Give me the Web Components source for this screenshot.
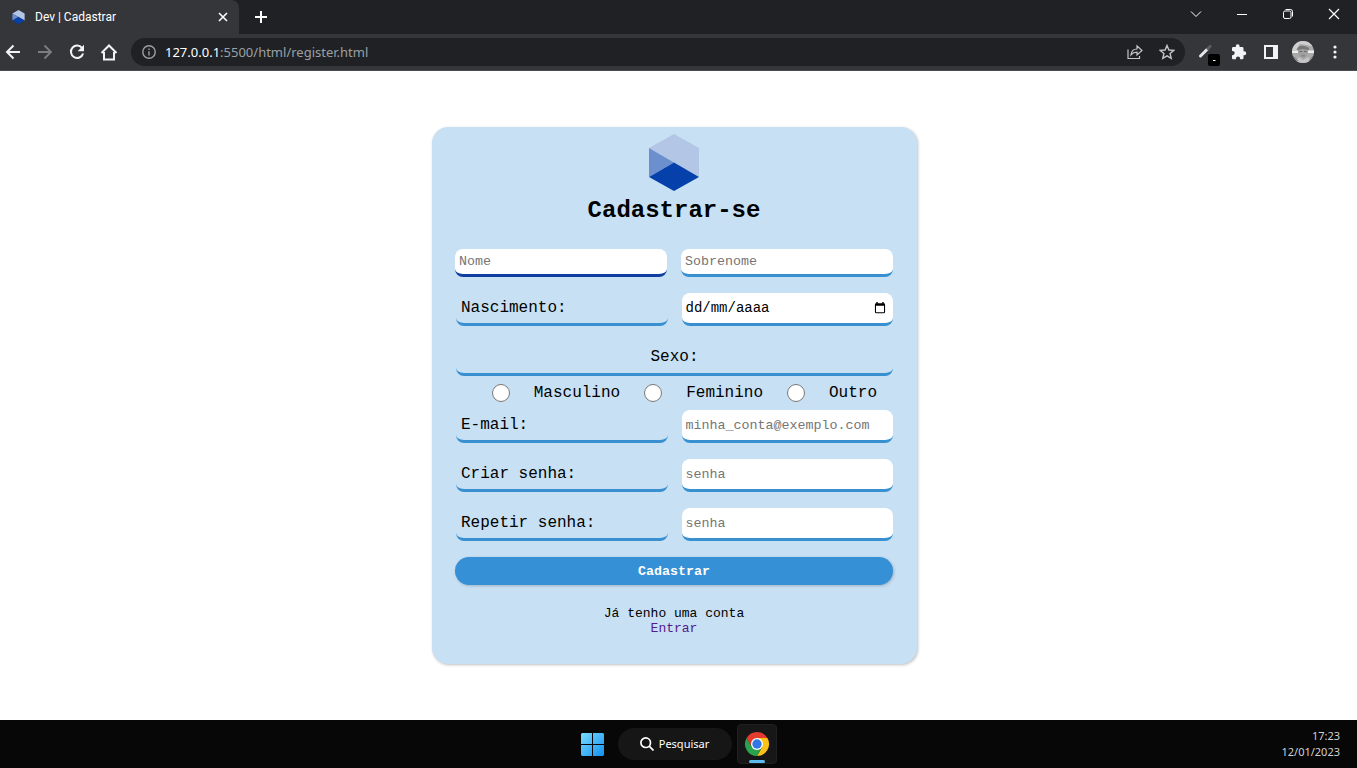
<!DOCTYPE html>
<html lang="pt-BR">
<head>
<meta charset="utf-8">
<title>Dev | Cadastrar</title>
<style>
  html, body { margin: 0; }
  body { background: #fff; color: #000; }
</style>
</head>
<body>
<app-window></app-window>

<script>
const define = (name, html, setup) => {
  const template = document.createElement('template');
  template.innerHTML = html;
  customElements.define(name, class extends HTMLElement {
    constructor() {
      super();
      this.attachShadow({ mode: 'open' }).append(template.content.cloneNode(true));
    }
    connectedCallback() { if (setup) setup(this, this.shadowRoot); }
  });
};

/* Hexagonal brand mark */
define('brand-mark', `
  <style>:host { display: block; } svg { display: block; width: 100%; height: 100%; }</style>
  <svg viewBox="0 0 50 57" aria-hidden="true">
    <path fill="#b4c6e5" d="M0 14 25 0 50 14V43L25 28.500Z"/>
    <path fill="#6c90ce" d="M0 14 25 28.500 0 43Z"/>
    <path fill="#0540ab" d="M0 43 25 28.500 50 43 25 57Z"/>
  </svg>`);

/* Flat icon button used through the window frame; the icon is slotted */
define('icon-button', `
  <style>
    :host { display: flex; flex: none; width: 32px; height: 32px; }
    button { all: unset; box-sizing: border-box; flex: 1; display: flex; align-items: center; justify-content: center; color: inherit; cursor: pointer; }
  </style>
  <button type="button"><slot></slot></button>`,
  (host, root) => root.querySelector('button').setAttribute('aria-label', host.getAttribute('label')));

/* Tab strip */
define('tab-strip', `
  <style>
    :host { display: flex; height: 34px; background: #202124; color: #fff; font: 12px/16px Roboto, sans-serif; }
    .tab { box-sizing: border-box; width: 239px; display: flex; align-items: center; padding-left: 12px; background: #35363a; border-radius: 0 8px 0 0; }
    brand-mark { width: 13px; height: 14px; margin-right: 10px; }
    .title { flex: 1; white-space: nowrap; }
    icon-button { height: 34px; }
    .new { width: 44px; }
    .space { flex: 1; }
    .win { width: 46px; height: 28px; }
  </style>
  <div class="tab">
    <brand-mark></brand-mark><span class="title">Dev | Cadastrar</span>
    <icon-button label="Fechar guia"><svg width="10" height="10" viewBox="0 0 10 10" fill="none" stroke="currentColor" stroke-width="1.600"><path d="M1 1l8 8M9 1 1 9"/></svg></icon-button>
  </div>
  <icon-button class="new" label="Nova guia"><svg width="12" height="12" viewBox="0 0 12 12" fill="none" stroke="currentColor" stroke-width="2"><path d="M6 0v12M0 6h12"/></svg></icon-button>
  <div class="space"></div>
  <icon-button class="win" label="Pesquisar guias"><svg width="12" height="8" viewBox="0 0 12 8" fill="none" stroke="currentColor"><path d="M1 1.500l5 5 5-5"/></svg></icon-button>
  <icon-button class="win" label="Minimizar"><svg width="10" height="10" viewBox="0 0 10 10" stroke="currentColor"><path d="M0 5.500h10"/></svg></icon-button>
  <icon-button class="win" label="Restaurar"><svg width="10" height="10" viewBox="0 0 10 10" fill="none" stroke="currentColor"><rect x=".5" y="2" width="7.500" height="7.500" rx="1.500"/><path d="M2.500.5H7.500Q9.500.5 9.500 2.500V7.500"/></svg></icon-button>
  <icon-button class="win" label="Fechar"><svg width="12" height="12" viewBox="0 0 12 12" stroke="currentColor" stroke-width="1.200"><path d="M1 1l10 10M11 1 1 11"/></svg></icon-button>`);

/* Navigation toolbar with the address box */
define('nav-toolbar', `
  <style>
    :host { display: flex; align-items: center; box-sizing: border-box; height: 37px; padding-right: 6px; background: #35363a; border-bottom: 1px solid #4c4c50; color: #f1f3f4; }
    nav { display: flex; margin: 0 6px 0 -3px; }
    .off { color: #7d7e82; }
    .address { flex: 1; display: flex; align-items: center; height: 28px; margin-right: 6px; padding: 0 2px; border-radius: 14px; background: #202124; color: #9aa0a6; font: 13px/20px "Noto Sans", sans-serif; }
    .url { flex: 1; white-space: nowrap; }
    b { font-weight: 400; color: #fff; }
    .avatar svg { border-radius: 50%; }
  </style>
  <nav>
    <icon-button label="Voltar"><svg width="16" height="16" viewBox="0 0 16 16" fill="none" stroke="currentColor" stroke-width="2"><path d="M15 8H2M8.500 1.500 2 8l6.500 6.500"/></svg></icon-button>
    <icon-button class="off" label="Avançar"><svg width="16" height="16" viewBox="0 0 16 16" fill="none" stroke="currentColor" stroke-width="1.800"><path d="M1 8H14M7.500 1.500 14 8l-6.500 6.500"/></svg></icon-button>
    <icon-button label="Recarregar"><svg width="16" height="16" viewBox="0 0 16 16" fill="none" stroke="currentColor" stroke-width="2"><path d="M13.300 4.300A6.200 6.200 0 1 0 14.100 9.500"/><path fill="currentColor" stroke="none" d="M15 .8V7.200H8.600Z"/></svg></icon-button>
    <icon-button label="Página inicial"><svg width="18" height="17" viewBox="0 0 18 17" fill="none" stroke="currentColor" stroke-width="2"><path d="M1.500 9 9 1.500 16.500 9M4 8V15.500H14V8"/></svg></icon-button>
  </nav>
  <div class="address">
    <icon-button label="Informações do site"><svg width="14" height="14" viewBox="0 0 14 14" fill="none" stroke="currentColor" stroke-width="1.400"><circle cx="7" cy="7" r="6.200"/><path d="M7 6.200V10.500M7 3.400V4.900"/></svg></icon-button>
    <span class="url"><b>127.0.0.1</b>:5500/html/register.html</span>
    <icon-button label="Compartilhar"><svg width="16" height="16" viewBox="0 0 16 16" fill="none" stroke="#c4c7c9" stroke-width="1.200"><path d="M1 5.500V14.500H12.500V12M4 10.800C4.500 7 7 5 10 5V1.800L15 6.500 10 11V8.200C7.500 8.200 5.500 9 4 10.800Z"/></svg></icon-button>
    <icon-button label="Favoritar"><svg width="16" height="16" viewBox="0 0 16 16" fill="none" stroke="#c4c7c9" stroke-width="1.400"><path d="M8 1.500 9.900 6 14.700 6.400 11.100 9.600 12.200 14.300 8 11.800 3.800 14.300 4.900 9.600 1.300 6.400 6.100 6Z"/></svg></icon-button>
  </div>
  <icon-button label="Seletor de cores"><svg width="28" height="28" viewBox="0 0 28 28"><path d="M7.500 18 14 11.500" stroke="#e8e8e8" stroke-width="3" stroke-linecap="round"/><path d="M14 11.500 18 7.500" stroke="#5e5f62" stroke-width="2.500"/><rect x="15" y="16" width="12" height="12" rx="2" fill="#000"/><path d="M20 22.500h2.500" stroke="#fff"/></svg></icon-button>
  <icon-button label="Extensões"><svg width="16" height="16" viewBox="0 0 16 16" fill="currentColor"><path d="M13.300 7.300H12.500V4.400Q12.500 3 11.200 3H8.600V2.200A1.900 1.900 0 0 0 4.800 2.200V3H2.200Q1 3 1 4.400V7H1.600A2.100 2.100 0 0 1 1.600 11.200H1V14Q1 15.300 2.200 15.300H4.900V14.600A2.100 2.100 0 0 1 9.100 14.600V15.300H11.200Q12.500 15.300 12.500 14V11.200H13.300A1.950 1.950 0 0 0 13.300 7.300Z"/></svg></icon-button>
  <icon-button label="Painel lateral"><svg width="14" height="14" viewBox="0 0 14 14"><path fill="currentColor" fill-rule="evenodd" d="M0 0H14V14H0ZM2 2V12H9V2Z"/></svg></icon-button>
  <icon-button class="avatar" label="Perfil"><svg width="22" height="22" viewBox="0 0 22 22"><path fill="#a9a9a9" d="M0 0H22V22H0Z"/><path fill="#cfcfcf" d="M0 0H22V6L15 4 8 3 4 9H0Z"/><path fill="#ededed" d="M0 9.500H6V12H0ZM16 9.500H22V12H16Z"/><ellipse cx="11" cy="11" rx="5" ry="6" fill="#a0a0a0"/><path fill="#777" d="M5 9Q6 4 12 5T17 9L11 8Z"/><path fill="#666" d="M7.500 10H10V11H7.500ZM12 10H14.500V11H12ZM9.500 14.500H13V15.300H9.500Z"/><path fill="#c4c4c4" d="M3 22 7 16 11 19 16 16 20 22Z"/><path stroke="#808080" d="M1 15 6 20M17 20 21 15"/></svg></icon-button>
  <icon-button label="Menu"><svg width="4" height="14" viewBox="0 0 4 14" fill="currentColor"><circle cx="2" cy="2" r="1.600"/><circle cx="2" cy="7" r="1.600"/><circle cx="2" cy="12" r="1.600"/></svg></icon-button>`);

/* Caption on the left, text box on the right */
define('form-field', `
  <style>
    :host { display: grid; grid-template-columns: 1fr 1fr; column-gap: 14px; padding-left: 1px; }
    label, .box { box-sizing: border-box; height: 33px; border-bottom: 3px solid var(--line); border-radius: 8px; }
    label { padding-left: 5px; font-size: 16px; line-height: 30px; }
    .box { display: flex; align-items: center; background: #fff; overflow: hidden; }
    input { flex: 1; min-width: 0; height: 30px; box-sizing: border-box; border: 0; padding: 0 0 0 4px; background: none; outline: 0; font-family: inherit; }
    :host(.date) input { font-size: 14px; }
    input::placeholder { color: var(--hint, #757575); }
    ::slotted(icon-button) { width: 26px; height: 30px; }
  </style>
  <label for="field"></label>
  <div class="box"><input id="field"><slot></slot></div>`,
  (host, root) => {
    root.querySelector('label').textContent = host.getAttribute('caption');
    const input = root.querySelector('input');
    input.type = host.getAttribute('type');
    input.placeholder = host.getAttribute('placeholder');
  });

/* Registration form */
define('register-card', `
  <style>
    :host { --line: #3890d0; display: block; box-sizing: border-box; width: 485px; max-width: 100%; padding: 7px 24px 28px 23px; border-radius: 16px; background: #c7e0f4; box-shadow: 1px 1px 3px rgba(0,0,0,.25); font: 16px/18px "Liberation Mono", "Courier New", monospace; }
    brand-mark { width: 50px; height: 57px; margin: 0 auto; }
    h1 { margin: 6px 0 24px; font-size: 24px; line-height: 28px; font-weight: 700; text-align: center; }
    form { display: flex; flex-direction: column; gap: 16px; }
    .names { display: grid; grid-template-columns: 1fr 1fr; gap: 14px; }
    .names input { box-sizing: border-box; width: 100%; min-width: 0; height: 28px; margin: 0; padding: 0 4px; border: 0; border-bottom: 3px solid var(--line); border-radius: 8px; background: #fff; outline: 0; font-family: inherit; }
    .names .current { border-color: #103f9f; }
    .date { --hint: #000; }
    fieldset { margin: 0 0 -16px; padding: 0 0 0 1px; border: 0; min-width: 0; }
    legend { box-sizing: border-box; width: 100%; height: 34px; padding: 0; border-bottom: 3px solid var(--line); border-radius: 8px; line-height: 30px; text-align: center; }
    .options { display: flex; align-items: center; justify-content: flex-end; gap: 24px; height: 34px; padding-right: 16px; }
    .options input { flex: none; width: 18px; height: 18px; margin: 0; }
    .send { height: 28px; padding: 0; border: 0; border-radius: 14px; background: #3590d5; color: #fff; font-family: inherit; font-weight: 700; box-shadow: 1px 1px 3px rgba(0,0,0,.2); }
    p { margin: 21px 0 0; font-size: 13px; line-height: 15px; text-align: center; }
    a { display: block; color: #551a8b; text-decoration: none; }
  </style>
  <brand-mark></brand-mark>
  <h1>Cadastrar-se</h1>
  <form>
    <div class="names">
      <input class="current" type="text" aria-label="Nome" placeholder="Nome">
      <input type="text" aria-label="Sobrenome" placeholder="Sobrenome">
    </div>
    <form-field class="date" type="text" caption="Nascimento:" placeholder="dd/mm/aaaa">
      <icon-button label="Abrir calendário"><svg width="12" height="12" viewBox="0 0 12 13"><path fill="#000" fill-rule="evenodd" d="M2 0H3.500V1.300H8.500V0H10V1.300Q11.500 1.300 11.500 2.800V10.800Q11.500 12.300 10 12.300H2Q.5 12.300 .5 10.800V2.800Q.5 1.300 2 1.300ZM1.700 4V11H10.300V4Z"/></svg></icon-button>
    </form-field>
    <fieldset>
      <legend>Sexo:</legend>
      <div class="options">
        <input type="radio" name="sex" id="m"><label for="m">Masculino</label>
        <input type="radio" name="sex" id="f"><label for="f">Feminino</label>
        <input type="radio" name="sex" id="o"><label for="o">Outro</label>
      </div>
    </fieldset>
    <form-field type="email" caption="E-mail:" placeholder="minha_conta@exemplo.com"></form-field>
    <form-field type="password" caption="Criar senha:" placeholder="senha"></form-field>
    <form-field type="password" caption="Repetir senha:" placeholder="senha"></form-field>
    <button class="send" type="button">Cadastrar</button>
  </form>
  <p>Já tenho uma conta <a href="#entrar">Entrar</a></p>`);

/* Desktop task bar */
define('task-bar', `
  <style>
    :host { display: grid; grid-template-columns: 1fr auto 1fr; align-items: center; height: 48px; background: #070707; color: #fff; font: 11px/16px "Noto Sans", "Open Sans", sans-serif; }
    .apps { grid-column: 2; display: flex; align-items: center; gap: 5px; }
    .start { width: 24px; height: 40px; margin-right: 8px; }
    .search { display: flex; align-items: center; justify-content: center; gap: 5px; width: 114px; height: 32px; padding: 0; border: 0; border-radius: 16px; background: #161616; color: #fff; font: inherit; }
    .chrome { box-sizing: border-box; width: 40px; height: 40px; border: 1px solid #202020; border-radius: 4px; background: #171717; }
    time { justify-self: end; padding-right: 17px; color: #d0d0d0; text-align: right; }
    time span { display: block; }
  </style>
  <div class="apps">
    <icon-button class="start" label="Iniciar"><svg width="23" height="23" viewBox="0 0 23 23"><defs><linearGradient id="g" gradientUnits="userSpaceOnUse" x2="23" y2="23"><stop stop-color="#7bdcff"/><stop offset="1" stop-color="#1290f0"/></linearGradient></defs><path fill="url(#g)" d="M1 0H11V11H0V1ZM12 0H22L23 1V11H12ZM0 12H11V23H1L0 22ZM12 12H23V22L22 23H12Z"/></svg></icon-button>
    <button class="search" type="button"><svg width="14" height="14" viewBox="0 0 14 14" fill="none" stroke="currentColor" stroke-width="1.700"><circle cx="5.700" cy="5.700" r="4.800"/><path d="M9.200 9.200 13.500 13.500"/></svg>Pesquisar</button>
    <icon-button class="chrome" label="Google Chrome"><svg width="38" height="38" viewBox="0 0 38 38"><g transform="translate(19 19)"><path fill="#fbc116" d="M0 0V-6H10.400A12 12 0 0 1 0 12L5.200 3Z"/><path fill="#2ba24c" d="M0 0 5.200 3 0 12A12 12 0 0 1-10.400-6L-5.200 3Z"/><path fill="#e33b2e" d="M0-6H10.400A12 12 0 0 0-10.400-6L-5.200 3Z"/><circle r="6" fill="#fff"/><circle r="4.700" fill="#2f77e5"/></g><rect x="11" y="35" width="16" height="3" rx="1.500" fill="#5bbcf0"/></svg></icon-button>
  </div>
  <time datetime="2023-01-12T17:23"><span>17:23</span><span>12/01/2023</span></time>`);

define('app-window', `
  <style>
    :host { display: flex; flex-direction: column; min-height: 100vh; }
    main { flex: 1; display: flex; align-items: center; justify-content: center; padding: 16px 8px 16px 0; }
  </style>
  <header><tab-strip></tab-strip><nav-toolbar></nav-toolbar></header>
  <main><register-card></register-card></main>
  <task-bar></task-bar>`);
</script>
</body>
</html>
